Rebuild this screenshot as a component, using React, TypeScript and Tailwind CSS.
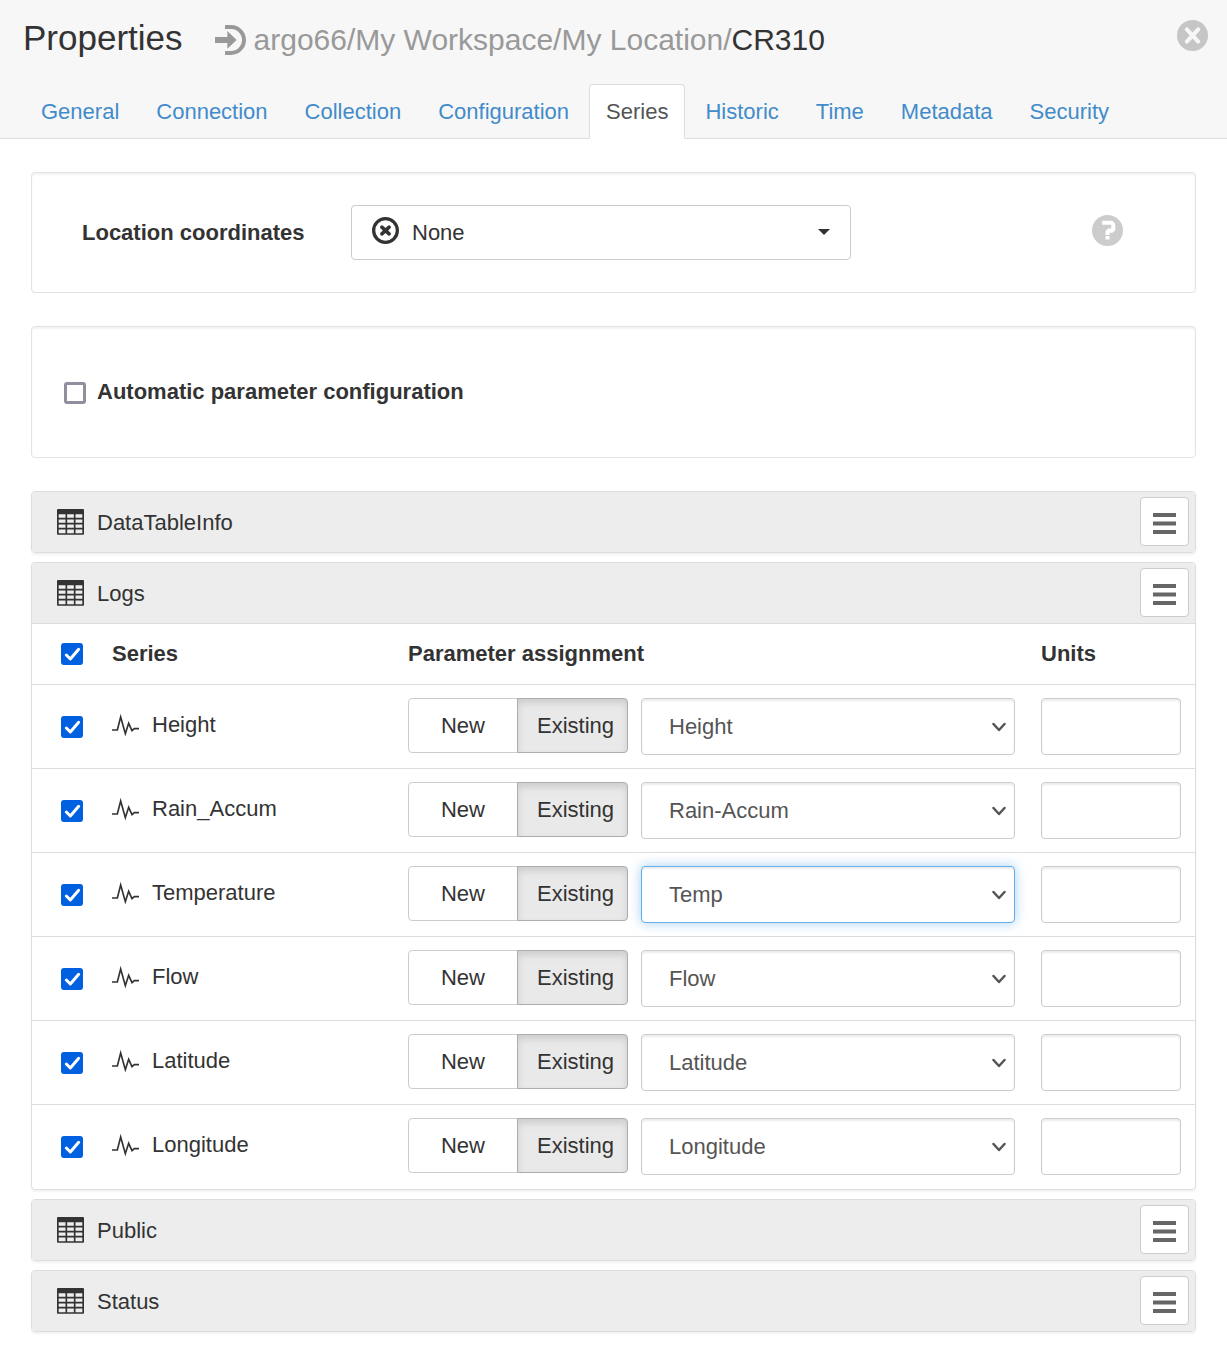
import { useState } from 'react';
import clsx from 'clsx';

const tabs = [
  'General',
  'Connection',
  'Collection',
  'Configuration',
  'Series',
  'Historic',
  'Time',
  'Metadata',
  'Security',
];

const parameters = ['Height', 'Rain-Accum', 'Temp', 'Flow', 'Latitude', 'Longitude'];

const initialRows = [
  { name: 'Height', parameter: 'Height' },
  { name: 'Rain_Accum', parameter: 'Rain-Accum' },
  { name: 'Temperature', parameter: 'Temp' },
  { name: 'Flow', parameter: 'Flow' },
  { name: 'Latitude', parameter: 'Latitude' },
  { name: 'Longitude', parameter: 'Longitude' },
];

function SourceIcon() {
  return (
    <svg viewBox="0 0 93 90" className="h-[30px] w-[31px] shrink-0" aria-hidden="true">
      <path d="M0 36h37V18l28 27-28 26V54H0z" fill="#999" />
      <path d="M30 6h18a39 39 0 0 1 0 78H30" fill="none" stroke="#999" strokeWidth="12" />
    </svg>
  );
}

function CloseIcon() {
  return (
    <svg viewBox="0 0 92 92" className="size-[31px]" aria-hidden="true">
      <circle cx="46" cy="46" r="46" fill="#c6c6c6" />
      <path
        d="M29 28l34 36M63 28L29 64"
        stroke="#f7f7f7"
        strokeWidth="12"
        strokeLinecap="round"
      />
    </svg>
  );
}

function HelpIcon() {
  return (
    <svg viewBox="0 0 92 92" className="size-[31px]" aria-hidden="true">
      <circle cx="46" cy="46" r="46" fill="#ccc" />
      <path
        d="M30 17h31l8 9v19l-8 8h-9v6H40V48l7-8h10V29H30zM40 62h12v11H40z"
        fill="#fff"
      />
    </svg>
  );
}

function NoneIcon() {
  return (
    <svg
      viewBox="0 0 82 82"
      className="pointer-events-none absolute left-[21px] top-3 size-[27px]"
      aria-hidden="true"
    >
      <circle cx="41" cy="41" r="36" fill="none" stroke="#333" strokeWidth="10" />
      <path d="M30 31l22 20M52 31L30 51" stroke="#333" strokeWidth="11" strokeLinecap="round" />
    </svg>
  );
}

function TableIcon() {
  return (
    <svg viewBox="0 0 81 78" className="h-[26px] w-[27px]" aria-hidden="true">
      <rect width="81" height="16" rx="3" fill="#333" />
      <path
        d="M2.500 12v63h76V12M28 12v62M53 12v62M2 29h77M2 44h77M2 59h77"
        fill="none"
        stroke="#333"
        strokeWidth="5"
        strokeLinejoin="round"
      />
    </svg>
  );
}

function PulseIcon() {
  return (
    <svg viewBox="0 0 81 72" className="h-6 w-[27px] shrink-0" aria-hidden="true">
      <path
        d="M0 51h16L26 12l14 50 10-31 10 22 7-6h14"
        fill="none"
        stroke="#333"
        strokeWidth="5"
        strokeMiterlimit="10"
      />
    </svg>
  );
}

type CheckProps = {
  id?: string;
  label?: string;
  checked: boolean;
  onChange: (checked: boolean) => void;
};

function Check({ id, label, checked, onChange }: CheckProps) {
  return (
    <span className="relative block size-[22px] shrink-0">
      <input
        id={id}
        type="checkbox"
        aria-label={label}
        checked={checked}
        onChange={(e) => onChange(e.target.checked)}
        className="block size-full appearance-none rounded-[3px] border-[3px] border-[#8f8f9d] bg-white checked:border-[#0060df] checked:bg-[#0060df]"
      />
      {checked && (
        <svg viewBox="0 0 66 66" className="pointer-events-none absolute inset-0" aria-hidden="true">
          <path
            d="M16 36l12 12 25-29"
            fill="none"
            stroke="#fff"
            strokeWidth="9"
            strokeLinecap="round"
            strokeLinejoin="round"
          />
        </svg>
      )}
    </span>
  );
}

function TableHeading({ name }: { name: string }) {
  return (
    <div className="flex h-[60px] items-center rounded-t bg-[#ededed] pl-[25px] pr-1.5">
      <TableIcon />
      <h2 className="ml-[13px] pt-0.5">{name}</h2>
      <button
        type="button"
        aria-label={`${name} menu`}
        className="ml-auto mt-[5px] flex size-[49px] items-center justify-center self-start rounded border border-[#ccc] bg-white"
      >
        <svg viewBox="0 0 23 25" className="h-[25px] w-[23px]" aria-hidden="true">
          <path d="M0 4h23v4H0zM0 12.500h23v4H0zM0 21h23v4H0z" fill="#666" />
        </svg>
      </button>
    </div>
  );
}

function ParameterSelect({ name, value }: { name: string; value: string }) {
  const [selected, setSelected] = useState(value);

  return (
    <div className="relative min-w-0 flex-1">
      <select
        aria-label={`${name} parameter`}
        value={selected}
        onChange={(e) => setSelected(e.target.value)}
        className={clsx(
          'block h-[57px] w-full appearance-none rounded border bg-white pl-[27px] pr-10 text-[#555] outline-none',
          value === 'Temp'
            ? 'border-[#66afe9] shadow-[inset_0_2px_2px_rgba(0,0,0,0.08),0_0_12px_rgba(102,175,233,0.6)]'
            : 'border-[#ccc] shadow-[inset_0_2px_2px_rgba(0,0,0,0.08)]'
        )}
      >
        {parameters.map((p) => (
          <option key={p}>{p}</option>
        ))}
      </select>
      <svg
        viewBox="0 0 14 10"
        className="pointer-events-none absolute right-[9px] top-6 h-2.5 w-3.5"
        aria-hidden="true"
      >
        <path
          d="M1.500 2L7 8l5.500-6"
          fill="none"
          stroke="#555"
          strokeWidth="2.500"
          strokeLinecap="round"
          strokeLinejoin="round"
        />
      </svg>
    </div>
  );
}

function Assignment() {
  const [existing, setExisting] = useState(true);
  const active =
    'z-10 border-[#adadad] bg-[#e9e9e9] shadow-[inset_0_4px_7px_rgba(0,0,0,0.125)]';

  return (
    <div className="flex h-[55px] w-[220px] shrink-0">
      <button
        type="button"
        aria-pressed={!existing}
        onClick={() => setExisting(false)}
        className={clsx(
          'relative w-[110px] rounded-l border',
          existing ? 'border-[#ccc]' : active
        )}
      >
        New
      </button>
      <button
        type="button"
        aria-pressed={existing}
        onClick={() => setExisting(true)}
        className={clsx(
          'relative -ml-px w-[111px] rounded-r border pl-1.5',
          existing ? active : 'border-[#ccc]'
        )}
      >
        Existing
      </button>
    </div>
  );
}

function SeriesTable() {
  const [checked, setChecked] = useState(initialRows.map(() => true));

  return (
    <table className="w-full table-fixed border-collapse text-left">
      <thead>
        <tr className="h-[61px] border-t border-[#ddd]">
          <th className="w-20 pl-[29px]">
            <Check
              label="All series"
              checked={checked.every(Boolean)}
              onChange={(value) => setChecked(checked.map(() => value))}
            />
          </th>
          <th className="w-[296px]">Series</th>
          <th>Parameter assignment</th>
          <th className="w-[154px]">Units</th>
        </tr>
      </thead>
      <tbody>
        {initialRows.map((row, i) => (
          <tr key={row.name} className="h-[84px] border-t border-[#ddd]">
            <td className="pl-[29px]">
              <Check
                label={row.name}
                checked={checked[i]}
                onChange={(value) => setChecked(checked.map((c, j) => (j === i ? value : c)))}
              />
            </td>
            <td>
              <div className="flex items-center gap-[13px] pb-1">
                <PulseIcon />
                <span>{row.name}</span>
              </div>
            </td>
            <td className="pr-[26px]">
              <div className="flex gap-[13px]">
                <Assignment />
                <ParameterSelect name={row.name} value={row.parameter} />
              </div>
            </td>
            <td className="pr-3.5">
              <input
                type="text"
                aria-label={`${row.name} units`}
                className="block h-[57px] w-full rounded border border-[#ccc] px-4 shadow-[inset_0_2px_2px_rgba(0,0,0,0.08)] outline-none"
              />
            </td>
          </tr>
        ))}
      </tbody>
    </table>
  );
}

export default function App() {
  const [automatic, setAutomatic] = useState(false);

  return (
    <div className="bg-white pb-6 font-['Liberation_Sans',Arial,sans-serif] text-[22px] leading-[30px] text-[#333]">
      <header className="border-b border-[#ddd] bg-[#f7f7f7] pt-4">
        <div className="flex items-center pl-[23px] pr-[19px]">
          <h1 className="text-[35px] leading-[44px]">Properties</h1>
          <div className="ml-8 flex items-center gap-2 pt-1">
            <SourceIcon />
            <p className="text-[30px] leading-[40px] text-[#999]">
              argo66/My Workspace/My Location/<span className="text-[#333]">CR310</span>
            </p>
          </div>
          <button type="button" aria-label="Close" className="ml-auto pb-1.5">
            <CloseIcon />
          </button>
        </div>
        <nav className="-mb-px mt-6 flex gap-[3px] pl-6">
          {tabs.map((tab) => (
            <a
              key={tab}
              href="#"
              className={clsx(
                'h-[55px] rounded-t border px-4 pt-3',
                tab === 'Series'
                  ? 'border-[#ddd] border-b-white bg-white text-[#555]'
                  : 'border-transparent text-[#428bca]'
              )}
            >
              {tab}
            </a>
          ))}
        </nav>
      </header>

      <main className="mx-[31px] mt-[33px]">
        <section className="flex items-center rounded border border-[#e3e3e3] py-8 pl-[50px] pr-[72px] shadow-[inset_0_2px_2px_rgba(0,0,0,0.05)]">
          <label htmlFor="coordinates" className="w-[269px] shrink-0 font-bold">
            Location coordinates
          </label>
          <div className="relative w-[500px]">
            <select
              id="coordinates"
              className="block h-[55px] w-full appearance-none rounded border border-[#ccc] bg-white pl-[60px] pr-10"
            >
              <option>None</option>
            </select>
            <NoneIcon />
            <svg
              viewBox="0 0 12 6"
              className="pointer-events-none absolute right-[21px] top-6 h-1.5 w-3"
              aria-hidden="true"
            >
              <path d="M0 0h12L6 6z" fill="#333" />
            </svg>
          </div>
          <button type="button" aria-label="Help" className="ml-auto pb-1">
            <HelpIcon />
          </button>
        </section>

        <section className="mt-[33px] flex h-[132px] items-center gap-[11px] rounded border border-[#e3e3e3] pl-8 pt-0.5 shadow-[inset_0_2px_2px_rgba(0,0,0,0.05)]">
          <Check id="automatic" checked={automatic} onChange={setAutomatic} />
          <label htmlFor="automatic" className="pb-0.5 font-bold">
            Automatic parameter configuration
          </label>
        </section>

        <div className="mt-[33px] flex flex-col gap-[9px]">
          {['DataTableInfo', 'Logs', 'Public', 'Status'].map((name) => (
            <section
              key={name}
              className="rounded border border-[#ddd] shadow-[0_2px_2px_rgba(0,0,0,0.05)]"
            >
              <TableHeading name={name} />
              {name === 'Logs' && <SeriesTable />}
            </section>
          ))}
        </div>
      </main>
    </div>
  );
}
